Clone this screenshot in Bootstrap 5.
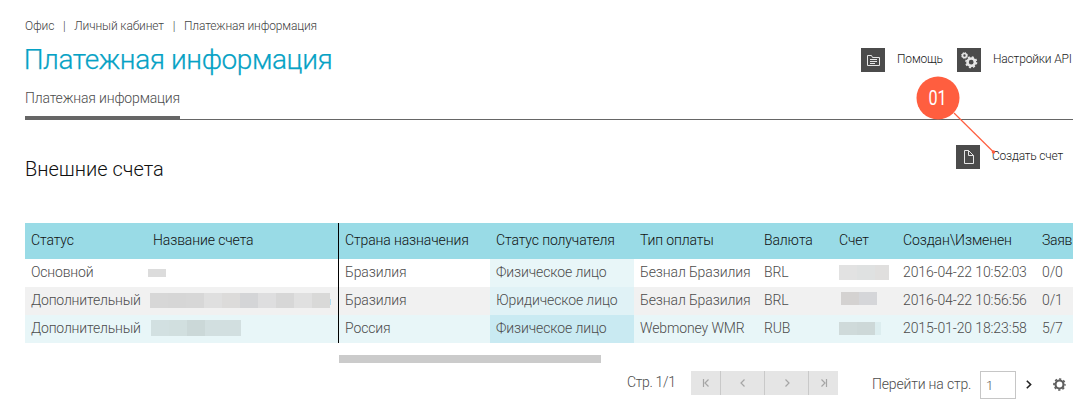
<!DOCTYPE html>
<html lang="ru">
<head>
<meta charset="utf-8">
<title>Платежная информация</title>
<link rel="stylesheet" href="https://cdn.jsdelivr.net/npm/bootstrap@5.3.0/dist/css/bootstrap.min.css">
<style>
body{font-family:Roboto,"Liberation Sans",sans-serif;font-weight:300;font-size:14px;line-height:20px;color:#4c4c4c;background:#fff;width:1090px;height:411px;overflow:hidden;letter-spacing:-.12px}
.page-wrap{padding:17px 17px 0 25px}
.crumbs{font-size:12px;line-height:18px;color:#444;--bs-breadcrumb-divider:"|";letter-spacing:-.14px}
.crumbs .breadcrumb-item+.breadcrumb-item{padding-left:8.8px}
.crumbs .breadcrumb-item+.breadcrumb-item::before{padding-right:8.8px;color:#444}
.page-title{font-size:28px;line-height:36px;font-weight:300;color:#06a2c5;letter-spacing:-.41px;margin:7px 0 0 -1.3px;-webkit-text-stroke:.25px #06a2c5}
.toolbar-item{font-size:12px;line-height:22px;color:#222;letter-spacing:-.17px;white-space:nowrap}
.tool-icon{width:24px;height:24px;background:#4b4b4b;margin-right:12px;flex:none}
.tab-row{border-bottom:1px solid #666;height:42px}
.tab-row .tab-on{height:42px;width:155px;padding-top:10px;border-bottom:4px solid #666;letter-spacing:-.17px;white-space:nowrap}
.section-title{font-size:20px;line-height:28px;font-weight:300;color:#111;margin:0;letter-spacing:0}
.grid-wrap{margin-top:40px}
.grid-table{table-layout:fixed;width:1048px;margin:0;color:inherit;border-collapse:separate;border-spacing:0}
.grid-table>:not(caption)>*>*{padding:0 0 2px 6px;height:28px;border:0;box-shadow:none;vertical-align:middle;white-space:nowrap;color:#4c4c4c;background:transparent}
.grid-table>thead>tr>th{height:36px;font-weight:300;background:#99dbe6;color:#111}
.grid-table>tbody>tr>td:first-child{letter-spacing:-.18px}
.grid-table>tbody>tr.even>td{background:#f1f1f1}
.grid-table>tbody>tr.picked>td{background:#e8f6f8}
.grid-table>:not(caption)>*>.lock{border-right:1px solid #000}
.grid-table>tbody>tr>td.sorted{background:#e8f6f8}
.grid-table>tbody>tr.even>td.sorted{background:#e0f2f6}
.grid-table>tbody>tr.picked>td.sorted{background:#c9eaf2}
.grid-table>tbody>tr>td.mask-cell{padding:0}
.masked{display:flex}
.masked i{display:block;flex:none;width:18px;height:100%}
.hscroll{width:262px;height:8px;background:#cbcbcb;margin:12px 0 0 314px}
.pager-row{margin:8px 7px 0 602px}
.pager-btns{height:24px;background:#e5e5e5;margin-left:15px}
.pager-btns .pg{border:0;border-left:1px solid #c9c9c9;background:none;padding:0;width:44px;display:flex;align-items:center;justify-content:center}
.pager-btns .pg:first-child{border:0;width:29px}
.pager-btns .pg:last-child{width:30px}
.page-input{width:36px;height:28px;border:1px solid #c6c6c6;border-radius:0;padding:0 0 0 5px;font-size:13px;font-weight:300;color:#555;margin-left:9px}
.callout-mark{position:absolute;left:914px;top:74px}
.callout-mark text{font:400 20px Roboto,sans-serif}
</style>
<script src="https://cdn.jsdelivr.net/npm/bootstrap@5.3.0/dist/js/bootstrap.bundle.min.js"></script>
</head>
<body class="position-relative">
<div class="page-wrap">
  <nav><ol class="breadcrumb crumbs mb-0">
    <li class="breadcrumb-item">Офис</li><li class="breadcrumb-item">Личный кабинет</li><li class="breadcrumb-item">Платежная информация</li>
  </ol></nav>
  <header class="d-flex justify-content-between">
    <h1 class="page-title">Платежная информация</h1>
    <div class="d-flex" style="margin-top:13px">
      <div class="toolbar-item d-flex" style="width:96px"><span class="tool-icon"><svg class="d-block" width="24" height="24" fill="none" stroke="#e6e6e6"><path d="M6.500 17.500v-10h4l1 2h7v8zM9 11.500h7M9 13.500h7M9 15.500h5"/></svg></span><span>Помощь</span></div>
      <div class="toolbar-item d-flex" style="width:116px"><span class="tool-icon"><svg class="d-block" width="24" height="24" fill="none" stroke="#e6e6e6"><circle cx="7.500" cy="7.500" r="2" stroke-width="1.600"/><circle cx="7.500" cy="7.500" r="3" stroke-width="1" stroke-dasharray="1.178 1.178"/><circle cx="14.200" cy="14.200" r="3.700" stroke-width="2.600"/><circle cx="14.200" cy="14.200" r="5.300" stroke-width="1.600" stroke-dasharray="2.081 2.081"/></svg></span><span>Настройки API</span></div>
    </div>
  </header>
  <div class="tab-row"><div class="tab-on">Платежная информация</div></div>
  <div class="d-flex justify-content-between" style="padding:25px 10px 0 0">
    <h2 class="section-title" style="margin-top:10px">Внешние счета</h2>
    <div class="toolbar-item d-flex" style="width:107px"><span class="tool-icon"><svg class="d-block" width="24" height="24" fill="none" stroke="#e6e6e6"><path d="M8.500 5.500h4l5 5v8h-9zM12.500 5.500v5h5"/></svg></span><span style="letter-spacing:-.2px">Создать счет</span></div>
  </div>
  <div class="grid-wrap">
    <table class="table grid-table">
      <colgroup><col style="width:122px"><col style="width:192px"><col style="width:151px"><col style="width:144px"><col style="width:124px"><col style="width:75px"><col style="width:64px"><col style="width:139px"><col style="width:37px"></colgroup>
      <thead><tr><th>Статус</th><th class="lock">Название счета</th><th>Страна назначения</th><th>Статус получателя</th><th>Тип оплаты</th><th>Валюта</th><th>Счет</th><th>Создан\Изменен</th><th style="letter-spacing:-.3px">Заяв</th></tr></thead>
      <tbody>
        <tr><td>Основной</td><td class="lock mask-cell"><div class="masked" style="height:8px;margin-left:1px"><i style="background:#dcdcdc"></i></div></td><td>Бразилия</td><td class="sorted">Физическое лицо</td><td>Безнал Бразилия</td><td>BRL</td><td class="mask-cell"><div class="masked" style="height:15px;margin:0 0 1px 6px"><i style="background:#e2e2e2"></i><i style="background:#dfe1e1"></i><i style="background:#e0dfde;width:14px"></i></div></td><td>2016-04-22 10:52:03</td><td>0/0</td></tr>
        <tr class="even"><td>Дополнительный</td><td class="lock mask-cell"><div class="masked" style="height:15px;margin:0 0 1px 3px"><i style="background:#d7d7d7"></i><i style="background:#d6d6d6"></i><i style="background:#d7d7d7"></i><i style="background:#dfdfdf"></i><i style="background:#dcdbda"></i><i style="background:#d4d5d7"></i><i style="background:#dededf"></i><i style="background:#d7d7d7"></i><i style="background:#e0e0e0"></i><i style="background:#d9d9d8"></i><i style="background:#afdcf0;width:1px;height:6px;margin-top:6px"></i></div></td><td>Бразилия</td><td class="sorted">Юридическое лицо</td><td>Безнал Бразилия</td><td>BRL</td><td class="mask-cell"><div class="masked" style="height:13px;margin:0 0 5px 8px"><i style="background:#d4d2d1"></i><i style="background:#d5d6d9"></i></div></td><td>2016-04-22 10:56:56</td><td>0/1</td></tr>
        <tr class="picked"><td>Дополнительный</td><td class="lock mask-cell"><div class="masked" style="height:16px;margin:0 0 2px 4px"><i style="background:#d2e0e1"></i><i style="background:#d1dfdf"></i><i style="background:#cbd8d8"></i><i style="background:#d2dfe0"></i><i style="background:#d2dfe0"></i></div></td><td>Россия</td><td class="sorted">Физическое лицо</td><td>Webmoney WMR</td><td>RUB</td><td class="mask-cell"><div class="masked" style="height:13px;margin:0 0 1px 6px"><i style="background:#cfdada"></i><i style="background:#cdd8d8"></i><i style="background:#dcedef;width:6px"></i></div></td><td>2015-01-20 18:23:58</td><td>5/7</td></tr>
      </tbody>
    </table>
  </div>
  <div class="hscroll"></div>
  <div class="pager-row d-flex">
    <div style="width:49px;padding-top:1px;letter-spacing:-.35px;white-space:nowrap">Стр. 1/1</div>
    <div class="pager-btns d-flex">
      <button class="pg" type="button" aria-label="Первая"><svg width="8" height="8" fill="none" stroke="#a5a5a5" stroke-width="1.200"><path d="M1.500 0v8M6.500.5L3 4l3.500 3.500"/></svg></button>
      <button class="pg" type="button" aria-label="Назад"><svg width="6" height="8" fill="none" stroke="#a5a5a5" stroke-width="1.200"><path d="M4.500.5L1 4l3.500 3.500"/></svg></button>
      <button class="pg" type="button" aria-label="Вперед"><svg width="6" height="8" fill="none" stroke="#a5a5a5" stroke-width="1.200"><path d="M1.500.5L5 4 1.500 7.500"/></svg></button>
      <button class="pg" type="button" aria-label="Последняя"><svg width="8" height="8" fill="none" stroke="#a5a5a5" stroke-width="1.200"><path d="M6.500 0v8M1.500.5L5 4 1.500 7.500"/></svg></button>
    </div>
    <div class="text-nowrap" style="margin-left:34px;padding-top:3px;width:99px;letter-spacing:-.17px">Перейти на стр.</div>
    <input class="page-input" value="1" aria-label="Страница">
    <svg class="flex-shrink-0" style="margin:9px 0 0 10px" width="6" height="9" fill="none" stroke="#222" stroke-width="1.600"><path d="M.8.800L4.600 4.500.8 8.200"/></svg>
    <svg class="flex-shrink-0" style="margin:7px 0 0 21px" width="13" height="13" fill="none" stroke="#5e5e5e"><circle cx="6.500" cy="6.500" r="4" stroke-width="2.200"/><circle cx="6.500" cy="6.500" r="5.500" stroke-width="1.700" stroke-dasharray="2.160 2.160" stroke-dashoffset="1.080"/></svg>
  </div>
</div>
<svg class="callout-mark" width="84" height="84"><path d="M40 39L79.500 78" stroke="#ff5e3f" stroke-width="1.200"/><circle cx="79.500" cy="78" r="1.800" fill="#ff5e3f"/><circle cx="24" cy="24" r="21.500" fill="#ff5e3f"/><text x="23.500" y="31" fill="#fff" text-anchor="middle" textLength="18" lengthAdjust="spacingAndGlyphs">01</text></svg>
</body>
</html>
